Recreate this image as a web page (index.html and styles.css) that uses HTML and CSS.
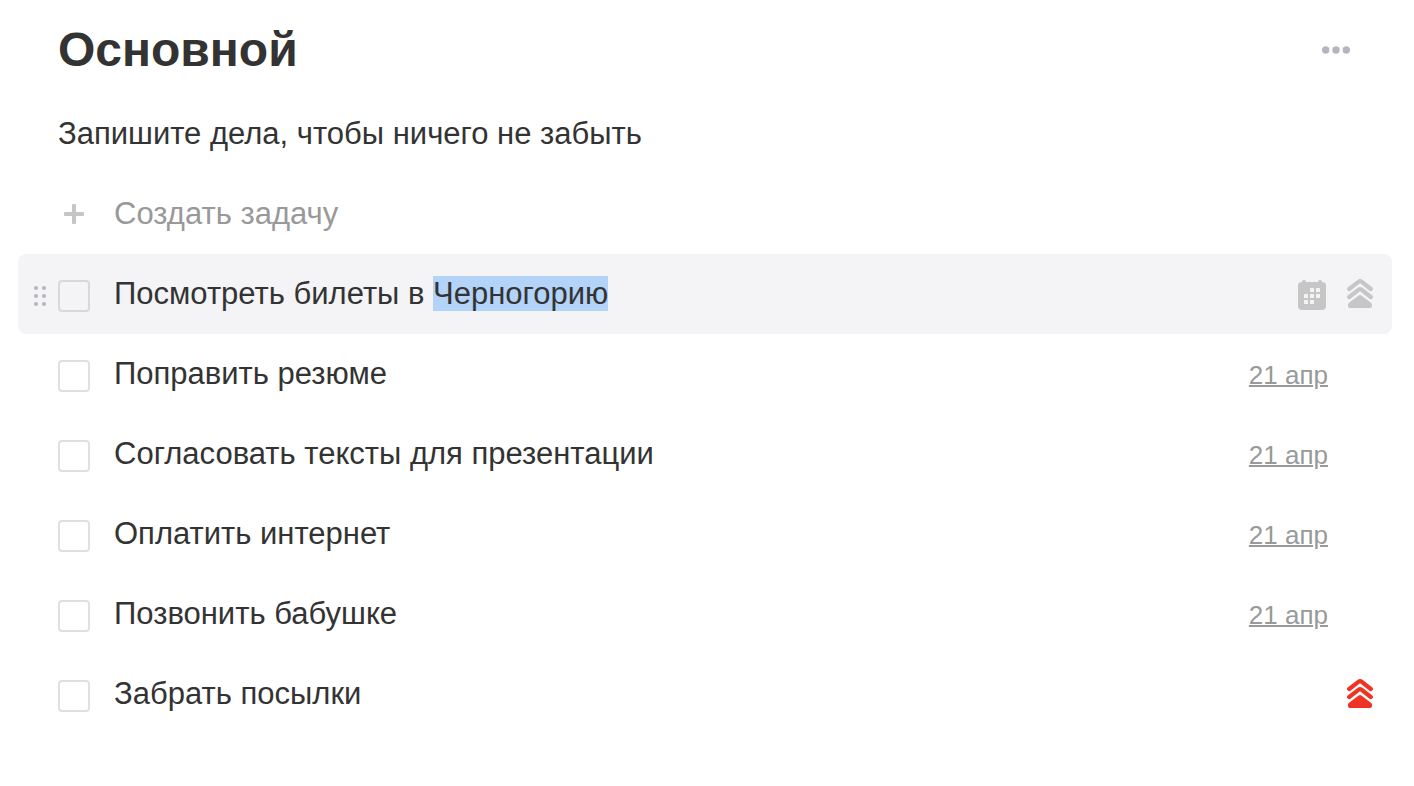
FILE: index.html
```html
<!DOCTYPE html>
<html lang="ru">
<head>
<meta charset="utf-8">
<meta name="viewport" content="width=device-width, initial-scale=1">
<title>Основной</title>
<link rel="stylesheet" href="styles.css">
</head>
<body>
<svg class="defs" width="0" height="0" aria-hidden="true">
  <symbol id="chevrons" viewBox="0 0 28 32">
    <path d="M3.2 11 L12.4 3.8 Q14 2.6 15.6 3.8 L24.8 11 M3.2 19 L12.4 11.8 Q14 10.6 15.6 11.8 L24.8 19" fill="none" stroke="currentColor" stroke-width="4.2" stroke-linecap="round" stroke-linejoin="round"/>
    <path d="M12.6 17.4 Q14 16.4 15.4 17.4 L25.2 25 Q26 25.7 26 26.8 V27.4 Q26 30 23.4 30 H4.6 Q2 30 2 27.4 V26.8 Q2 25.7 2.8 25 Z" fill="currentColor"/>
  </symbol>
</svg>
<main class="page">
  <header class="header">
    <h1 class="title">Основной</h1>
    <button class="icon-button more" type="button" aria-label="Ещё">
      <svg width="28" height="8" viewBox="0 0 28 8"><g fill="currentColor"><circle cx="3.7" cy="4" r="3.7"/><circle cx="14" cy="4" r="3.7"/><circle cx="24.3" cy="4" r="3.7"/></g></svg>
    </button>
  </header>
  <p class="intro">Запишите дела, чтобы ничего не забыть</p>
  <button class="row create" type="button">
    <svg class="plus" width="32" height="20" viewBox="0 0 32 20"><g fill="currentColor"><rect x="14" width="4" height="20" rx="1"/><rect x="6" y="8" width="20" height="4" rx="1"/></g></svg>
    <span>Создать задачу</span>
  </button>
  <ul class="tasks">
    <li class="row active">
      <svg class="grip" width="12" height="20" viewBox="0 0 12 20"><g fill="currentColor"><circle cx="2" cy="2" r="2"/><circle cx="10" cy="2" r="2"/><circle cx="2" cy="10" r="2"/><circle cx="10" cy="10" r="2"/><circle cx="2" cy="18" r="2"/><circle cx="10" cy="18" r="2"/></g></svg>
      <input class="check" type="checkbox" id="t1">
      <label class="name" for="t1">Посмотреть билеты в <mark class="selected">Черногорию</mark></label>
      <button class="icon-button calendar" type="button" aria-label="Дата">
        <svg width="28" height="32" viewBox="0 0 28 32">
          <g fill="currentColor"><rect y="4" width="28" height="28" rx="4"/><rect x="4" y="2" width="4" height="5" rx="2"/><rect x="20" y="2" width="4" height="5" rx="2"/></g>
          <g class="days"><rect x="12" y="10" width="4" height="4" rx="0.5"/><rect x="18" y="10" width="4" height="4" rx="0.5"/><rect x="6" y="16" width="4" height="4" rx="0.5"/><rect x="12" y="16" width="4" height="4" rx="0.5"/><rect x="18" y="16" width="4" height="4" rx="0.5"/><rect x="6" y="22" width="4" height="4" rx="0.5"/><rect x="12" y="22" width="4" height="4" rx="0.5"/></g>
        </svg>
      </button>
      <button class="icon-button priority" type="button" aria-label="Приоритет"><svg width="28" height="32"><use href="#chevrons"/></svg></button>
    </li>
    <li class="row"><input class="check" type="checkbox" id="t2"><label class="name" for="t2">Поправить резюме</label><a class="date" href="#t2">21 апр</a></li>
    <li class="row"><input class="check" type="checkbox" id="t3"><label class="name" for="t3">Согласовать тексты для презентации</label><a class="date" href="#t3">21 апр</a></li>
    <li class="row"><input class="check" type="checkbox" id="t4"><label class="name" for="t4">Оплатить интернет</label><a class="date" href="#t4">21 апр</a></li>
    <li class="row"><input class="check" type="checkbox" id="t5"><label class="name" for="t5">Позвонить бабушке</label><a class="date" href="#t5">21 апр</a></li>
    <li class="row"><input class="check" type="checkbox" id="t6"><label class="name" for="t6">Забрать посылки</label><button class="icon-button priority urgent" type="button" aria-label="Приоритет"><svg width="28" height="32"><use href="#chevrons"/></svg></button></li>
  </ul>
</main>
</body>
</html>
```
FILE: styles.css
```css
* { box-sizing: border-box; }
body { margin: 0; background: #fff; color: #333; font: 31px/40px "Liberation Sans", Arial, sans-serif; }
.defs { position: absolute; }
.page { padding: 20px 22px 52px 18px; }
.header { display: flex; align-items: center; justify-content: space-between; height: 60px; padding: 0 42px 0 40px; }
.title { margin: 0; font-size: 48px; line-height: 60px; }
.intro { margin: 0; padding: 34px 40px 20px; }
button { border: 0; padding: 0; background: none; font: inherit; }
.icon-button { display: flex; color: #c6c6c6; }
.more { color: #b5b5bd; }
.row { position: relative; display: flex; align-items: center; width: 100%; min-height: 80px; padding: 0 18px 0 40px; border-radius: 8px; }
.create { gap: 24px; color: #999; }
.plus { color: #c6c6c6; }
.tasks { list-style: none; margin: 0; padding: 0; }
.active { background: #f4f4f7; }
.grip { position: absolute; left: 16px; top: 32px; color: #b5b5bd; }
.check { appearance: none; flex: none; width: 32px; height: 32px; margin: 4px 24px 0 0; border: 2px solid #e0e0e0; border-radius: 4px; }
.active .check { border-color: #d8d8da; }
.name { flex: 1; }
.selected { background: #b3d3f9; color: inherit; }
.calendar { margin-right: 20px; }
.days { fill: #f4f4f7; }
.date { margin: 2px 46px 0 0; font-size: 26px; color: #999; text-decoration-thickness: 2px; }
.urgent { color: #ee3524; }
```
